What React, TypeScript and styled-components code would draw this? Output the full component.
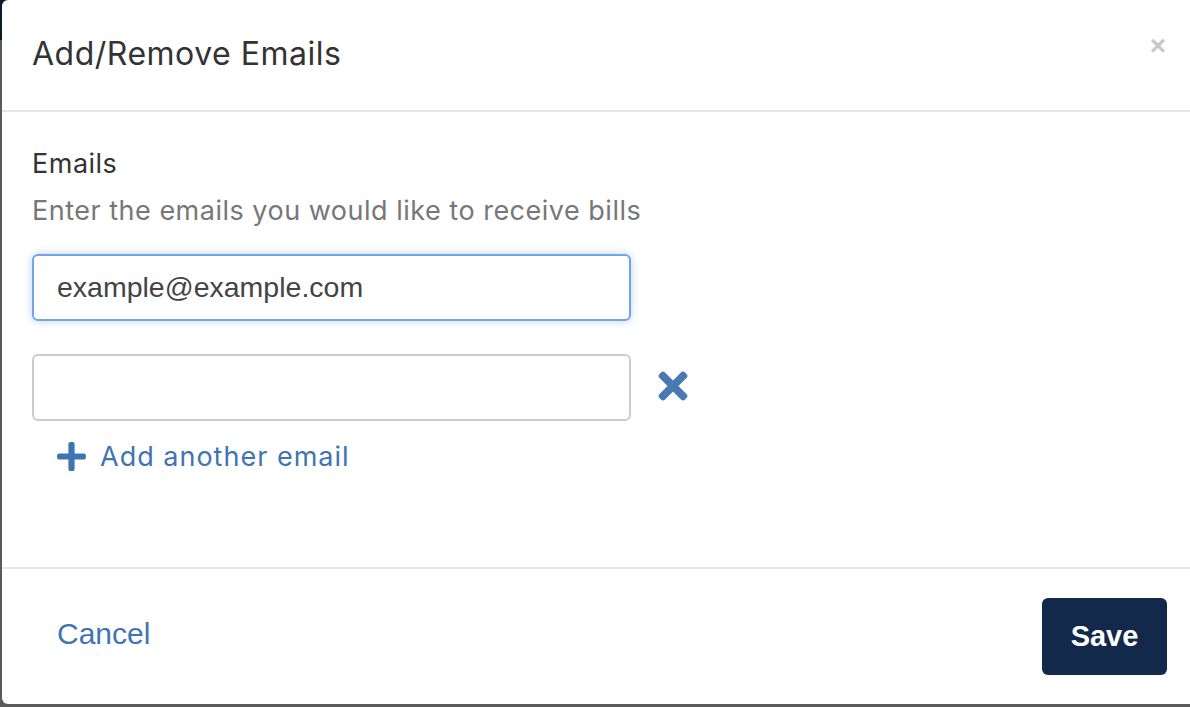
import { FC } from "react";
import styled, { createGlobalStyle } from "styled-components";
import { FaPlus, FaTimes } from "react-icons/fa";

const GlobalStyle = createGlobalStyle`
  html, body {
    margin: 0;
    padding: 0;
    height: 707px;
    overflow: hidden;
    background: #555;
  }
`;

const SANS = `"Inter", "Noto Sans", sans-serif`;
const HELV = `"Liberation Sans", Arial, sans-serif`;
const LINK_BLUE = "#3f74b3";

const Backdrop = styled.div`
  width: 1190px;
  height: 707px;
  background: linear-gradient(180deg, #0d1b2a 0 40px, #5a5a5a 40px);
  overflow: hidden;
`;

const Modal = styled.div`
  margin-left: 2px;
  width: 1198px;
  height: 704px;
  background: #fff;
  border-radius: 6px;
  display: flex;
  flex-direction: column;
`;

const Header = styled.div`
  flex: none;
  height: 112px;
  box-sizing: border-box;
  padding: 0 32px 0 30px;
  display: flex;
  align-items: center;
  justify-content: space-between;
  border-bottom: 2px solid #e5e5e5;
`;

const Title = styled.h2`
  margin: 0;
  padding-bottom: 4px;
  font-family: ${SANS};
  font-weight: 400;
  font-size: 32px;
  letter-spacing: 0.5px;
  color: #333;
`;

const CloseButton = styled.button`
  border: 0;
  background: none;
  padding: 0;
  margin-right: 2px;
  margin-bottom: 18px;
  font-family: ${HELV};
  font-weight: 700;
  font-size: 28px;
  line-height: 1;
  color: #c8c8c8;
  cursor: pointer;
`;

const Body = styled.div`
  flex: 1;
  padding: 37px 30px 0;
`;

const Label = styled.div`
  font-family: ${SANS};
  font-size: 27px;
  line-height: 30px;
  letter-spacing: 0.5px;
  color: #333;
`;

const Hint = styled.div`
  margin-top: 17px;
  font-family: ${SANS};
  font-size: 27px;
  line-height: 30px;
  letter-spacing: 0.5px;
  color: #777;
`;

const InputRow = styled.div<{ $first?: boolean }>`
  display: flex;
  align-items: center;
  gap: 21px;
  margin-top: ${(p) => (p.$first ? "28px" : "33px")};
`;

const EmailInput = styled.input<{ $focused?: boolean }>`
  width: 599px;
  height: 67px;
  box-sizing: border-box;
  padding: 0 23px;
  border-radius: 6px;
  border: 2px solid ${(p) => (p.$focused ? "#72a5e2" : "#cccccc")};
  box-shadow: ${(p) =>
    p.$focused ? "0 0 9px rgba(102, 160, 230, 0.45)" : "none"};
  font-family: ${HELV};
  font-size: 28.5px;
  color: #444;
  outline: none;
`;

const RemoveButton = styled.button`
  border: 0;
  background: none;
  padding: 0;
  margin-top: -4px;
  display: flex;
  color: #4a78b2;
  cursor: pointer;
`;

const AddLink = styled.button`
  margin-top: 19px;
  margin-left: 23px;
  border: 0;
  background: none;
  padding: 0;
  display: flex;
  align-items: center;
  gap: 12px;
  font-family: ${SANS};
  font-size: 27px;
  letter-spacing: 1px;
  color: ${LINK_BLUE};
  cursor: pointer;
`;

const Footer = styled.div`
  flex: none;
  height: 137px;
  box-sizing: border-box;
  border-top: 2px solid #e5e5e5;
  padding: 0 33px 0 55px;
  display: flex;
  align-items: center;
  justify-content: space-between;
`;

const CancelLink = styled.button`
  border: 0;
  background: none;
  padding: 0;
  margin-top: -6px;
  font-family: ${HELV};
  font-size: 30px;
  color: ${LINK_BLUE};
  cursor: pointer;
`;

const SaveButton = styled.button`
  width: 125px;
  height: 77px;
  border: 0;
  border-radius: 6px;
  background: #13294b;
  color: #fff;
  font-family: ${HELV};
  font-weight: 700;
  font-size: 29px;
  cursor: pointer;
`;

const App: FC = () => {
  return (
    <Backdrop>
      <GlobalStyle />
      <Modal>
        <Header>
          <Title>Add/Remove Emails</Title>
          <CloseButton aria-label="Close">×</CloseButton>
        </Header>
        <Body>
          <Label>Emails</Label>
          <Hint>Enter the emails you would like to receive bills</Hint>
          <InputRow $first>
            <EmailInput $focused defaultValue="example@example.com" />
          </InputRow>
          <InputRow>
            <EmailInput />
            <RemoveButton aria-label="Remove email">
              <FaTimes size={42} />
            </RemoveButton>
          </InputRow>
          <AddLink>
            <FaPlus size={33} />
            Add another email
          </AddLink>
        </Body>
        <Footer>
          <CancelLink>Cancel</CancelLink>
          <SaveButton>Save</SaveButton>
        </Footer>
      </Modal>
    </Backdrop>
  );
};

export default App;
